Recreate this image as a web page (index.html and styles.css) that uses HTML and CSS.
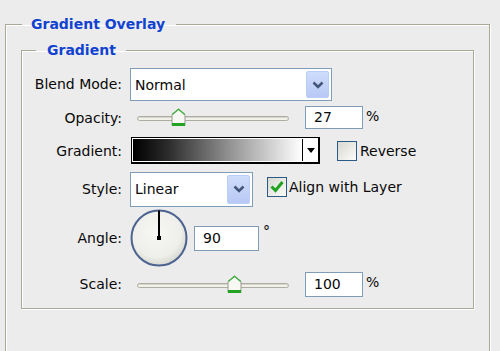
FILE: index.html
```html
<!DOCTYPE html>
<html lang="en">
<head>
  <meta charset="UTF-8" />
  <title>Gradient Overlay</title>
  <link rel="stylesheet" href="styles.css">
</head>
<body>
<fieldset class="group outer">
  <legend>Gradient Overlay</legend>

  <fieldset class="group inner">
    <legend>Gradient</legend>

    <!-- Blend mode -->
    <div class="row r-blend">
      <span class="label">Blend Mode:</span>
      <div class="select blend">
        <span class="select-value">Normal</span>
        <span class="select-btn">
          <svg width="12" height="8" viewBox="0 0 12 8"><path d="M1.5 1.5 L6 6 L10.5 1.5" fill="none" stroke="#42567a" stroke-width="2.6"/></svg>
        </span>
      </div>
    </div>

    <!-- Opacity -->
    <div class="row r-opacity">
      <span class="label">Opacity:</span>
      <div class="slider">
        <div class="track"></div>
        <svg class="thumb" style="left:calc(27% - 7px)" width="15" height="19" viewBox="0 0 15 19">
          <path d="M1 6.5 L7.5 1 L14 6.5 V17.5 H1 Z" fill="#f7f7f3" stroke="#9b9b93"/>
          <path d="M1.3 6.5 L7.5 1.3 L13.7 6.5" fill="none" stroke="#3cae3c" stroke-width="1.4"/>
          <rect x="1" y="15" width="13" height="3" fill="#22a322"/>
        </svg>
      </div>
      <div class="num">27</div>
      <span class="unit">%</span>
    </div>

    <!-- Gradient -->
    <div class="row r-gradient">
      <span class="label">Gradient:</span>
      <div class="grad-pick">
        <div class="grad-bar"></div>
        <div class="grad-arrow">
          <svg width="8" height="5" viewBox="0 0 8 5"><path d="M0 0 H8 L4 5 Z" fill="#000"/></svg>
        </div>
      </div>
      <span class="check reverse"></span>
      <span class="check-text">Reverse</span>
    </div>

    <!-- Style -->
    <div class="row r-style">
      <span class="label">Style:</span>
      <div class="select style">
        <span class="select-value">Linear</span>
        <span class="select-btn">
          <svg width="12" height="8" viewBox="0 0 12 8"><path d="M1.5 1.5 L6 6 L10.5 1.5" fill="none" stroke="#42567a" stroke-width="2.6"/></svg>
        </span>
      </div>
      <span class="check align">
        <svg width="18" height="18" viewBox="0 0 18 18"><path d="M3.5 8.5 L7.5 12.5 L14.5 4" fill="none" stroke="#1fa31f" stroke-width="3"/></svg>
      </span>
      <span class="check-text">Align with Layer</span>
    </div>

    <!-- Angle -->
    <div class="row r-angle">
      <span class="label">Angle:</span>
      <svg class="dial" width="58" height="58" viewBox="0 0 58 58">
        <defs>
          <radialGradient id="dialFill" cx="0.45" cy="0.4" r="0.6">
            <stop offset="0" stop-color="#f7f7f5"/>
            <stop offset="0.75" stop-color="#eeeeea"/>
            <stop offset="1" stop-color="#d9d9d2"/>
          </radialGradient>
        </defs>
        <circle cx="29" cy="29" r="27.5" fill="url(#dialFill)" stroke="#4c6390" stroke-width="2"/>
        <line x1="29" y1="29" x2="29" y2="1.5" stroke="#000" stroke-width="2"/>
        <rect x="27" y="27" width="4" height="4" fill="#000"/>
      </svg>
      <div class="num angle">90</div>
      <span class="degree">°</span>
    </div>

    <!-- Scale -->
    <div class="row r-scale">
      <span class="label">Scale:</span>
      <div class="slider">
        <div class="track"></div>
        <svg class="thumb" style="left:calc(64% - 7px)" width="15" height="19" viewBox="0 0 15 19">
          <path d="M1 6.5 L7.5 1 L14 6.5 V17.5 H1 Z" fill="#f7f7f3" stroke="#9b9b93"/>
          <path d="M1.3 6.5 L7.5 1.3 L13.7 6.5" fill="none" stroke="#3cae3c" stroke-width="1.4"/>
          <rect x="1" y="15" width="13" height="3" fill="#22a322"/>
        </svg>
      </div>
      <div class="num">100</div>
      <span class="unit">%</span>
    </div>
  </fieldset>
</fieldset>
</body>
</html>
```

FILE: styles.css
```css
:root {
  --bg: #ececec;
  --text: #080808;
  --legend: #1142d0;
  --line: #aba896;
  --field: #7f9db9;
  --font: "DejaVu Sans", Verdana, sans-serif;
}

body {
  margin: 0;
  height: 351px;
  background: var(--bg);
  color: var(--text);
  font-family: var(--font);
  font-size: 14px;
  overflow: hidden;
}

/* grooved XP style group boxes */
.group {
  margin: 0;
  padding: 0;
  min-inline-size: 0;
  border: 1px solid var(--line);
  box-shadow: inset 1px 1px 0 #fff, 1px 1px 0 #fff;
}

.group legend {
  font-weight: bold;
  color: var(--legend);
  line-height: 17px;
}

/* outer box runs on past the bottom of the window */
.outer {
  box-sizing: border-box;
  margin: 16px 10px 0 5px;
  height: 335px;
  border-bottom: none;
}

.outer > legend {
  margin-left: 16px;
  padding: 0 11px 0 9px;
}

.inner {
  margin: 9px 15px 0 15px;
  padding: 9px 0 6px 0;
}

.inner > legend {
  margin-left: 14px;
  padding: 0 10px 0 11px;
}

/* rows */
.row {
  display: flex;
  align-items: center;
}

.r-blend    { height: 34px; align-items: flex-start; }
.r-opacity  { height: 31px; }
.r-gradient { height: 35px; }
.r-style    { height: 42px; }
.r-angle    { height: 56px; }
.r-scale    { height: 36px; }

.r-blend .label { line-height: 33px; }

.label {
  width: 100px;
  margin-right: 8px;
  text-align: right;
  white-space: nowrap;
}

/* dropdowns */
.select {
  box-sizing: border-box;
  display: flex;
  align-items: center;
  justify-content: space-between;
  background: #fff;
  border: 1px solid var(--field);
  padding: 2px 2px 2px 4px;
}

.select.blend { width: 202px; height: 33px; }
.select.style { width: 123px; height: 35px; }

.select-btn {
  box-sizing: border-box;
  width: 23px;
  height: 100%;
  display: flex;
  align-items: center;
  justify-content: center;
  border: 1px solid #bccdf5;
  border-radius: 2px;
  background: linear-gradient(#cfdcfb, #b7c9f5);
}

/* sliders */
.slider {
  position: relative;
  width: 152px;
  height: 19px;
  margin-left: 7px;
  display: flex;
  align-items: center;
}

.track {
  box-sizing: border-box;
  width: 100%;
  height: 5px;
  margin-top: 2px;
  border: 1px solid #aeada3;
  border-radius: 3px;
  background: #f3f2ea;
  box-shadow: inset 0 1px 0 #d6d5cc;
}

.thumb {
  position: absolute;
  top: 0;
}

/* numeric fields */
.num {
  box-sizing: border-box;
  width: 58px;
  height: 23px;
  margin-left: 16px;
  padding-left: 8px;
  line-height: 21px;
  background: #fff;
  border: 1px solid var(--field);
}

.r-scale .num { height: 25px; line-height: 23px; }

.num.angle {
  width: 65px;
  height: 25px;
  margin-left: 6px;
  line-height: 23px;
}

.unit {
  margin-left: 3px;
  margin-bottom: 4px;
}

.degree {
  margin-left: 4px;
  margin-bottom: 14px;
}

/* gradient picker */
.grad-pick {
  box-sizing: border-box;
  width: 189px;
  height: 27px;
  margin-left: 1px;
  display: flex;
  background: #fff;
  border: 1px solid #000;
  border-width: 1px 2px 2px 1px;
}

.grad-bar {
  flex: 1;
  margin: 1px;
  background: linear-gradient(to right, #000 0%, #2a2a2a 20%, #9a9a9a 60%, #fff 100%);
  border-right: 1px solid #000;
}

.grad-arrow {
  width: 14px;
  display: flex;
  align-items: center;
  justify-content: center;
}

/* checkboxes */
.check {
  box-sizing: border-box;
  width: 20px;
  height: 20px;
  display: flex;
  align-items: center;
  justify-content: center;
  border: 1px solid #2c5a86;
  background: linear-gradient(135deg, #d9d9d2, #fbfbfa);
}

.check.reverse { margin-left: 17px; }
.check.align   { margin-left: 14px; margin-top: -4px; }

.check-text {
  margin-left: 3px;
}

.r-style .check-text { margin-left: 2px; margin-top: -4px; }

.dial {
  display: block;
}
```
